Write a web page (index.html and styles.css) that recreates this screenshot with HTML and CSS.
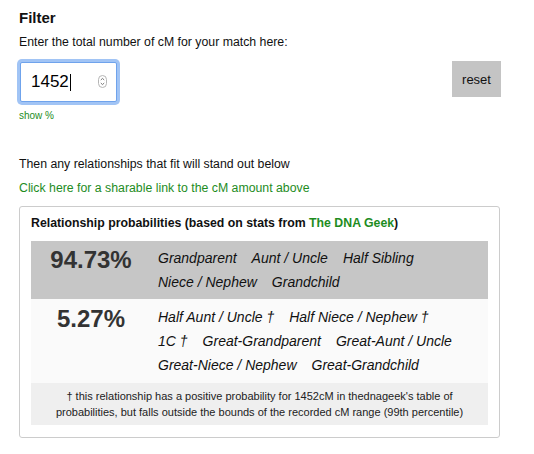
FILE: index.html
```html
<!DOCTYPE html>
<html lang="en">
<head>
    <meta charset="UTF-8">
    <meta name="viewport" content="width=device-width, initial-scale=1.0">
    <title>cM Relationship Filter</title>
    <link rel="stylesheet" href="styles.css">
</head>
<body>
    <div class="page">
        <h3 class="title">Filter</h3>
        <p class="lead">Enter the total number of cM for your match here:</p>

        <!-- cM input + reset -->
        <div class="input-row">
            <div class="number-field">
                <span class="value">1452</span>
                <span class="caret"></span>
                <svg class="spinner" width="9" height="13" viewBox="0 0 9 13">
                    <rect x="0.5" y="0.5" width="8" height="12" rx="4" fill="#fff" stroke="#b5b5b5"/>
                    <path d="M2.8 5 L4.5 3.4 L6.2 5" fill="none" stroke="#666" stroke-width="0.9"/>
                    <path d="M2.8 8 L4.5 9.6 L6.2 8" fill="none" stroke="#666" stroke-width="0.9"/>
                </svg>
            </div>
            <button class="reset" type="button">reset</button>
        </div>
        <a class="show-pct" href="#">show %</a>

        <p class="lead then">Then any relationships that fit will stand out below</p>
        <a class="share" href="#">Click here for a sharable link to the cM amount above</a>

        <!-- Results -->
        <div class="results">
            <h4 class="results-title">Relationship probabilities (based on stats from <a href="#">The DNA Geek</a>)</h4>

            <div class="prob-row top">
                <div class="pct">94.73%</div>
                <div class="names">
                    <span>Grandparent</span>
                    <span>Aunt / Uncle</span>
                    <span>Half Sibling</span>
                    <span>Niece / Nephew</span>
                    <span>Grandchild</span>
                </div>
            </div>

            <div class="prob-row">
                <div class="pct">5.27%</div>
                <div class="names">
                    <span>Half Aunt / Uncle &dagger;</span>
                    <span>Half Niece / Nephew &dagger;</span>
                    <span>1C &dagger;</span>
                    <span>Great-Grandparent</span>
                    <span>Great-Aunt / Uncle</span>
                    <span>Great-Niece / Nephew</span>
                    <span>Great-Grandchild</span>
                </div>
            </div>

            <div class="footnote">
                &dagger; this relationship has a positive probability for 1452cM in thednageek's table of
                probabilities, but falls outside the bounds of the recorded cM range (99th percentile)
            </div>
        </div>
    </div>
</body>
</html>
```

FILE: styles.css
```css
* {
    margin: 0;
    padding: 0;
    box-sizing: border-box;
    font-family: 'Liberation Sans', Arial, sans-serif;
}

body {
    background-color: #fff;
    color: #111;
}

.page {
    width: 482px;
    margin-left: 19px;
    padding-top: 9px;
}

.title {
    font-size: 15px;
    line-height: 18px;
    font-weight: bold;
}

.lead {
    font-size: 12.3px;
    line-height: 16px;
    margin-top: 7px;
}

.input-row {
    display: flex;
    justify-content: space-between;
    align-items: flex-start;
    margin-top: 11px;
}

.number-field {
    display: flex;
    align-items: center;
    width: 97px;
    height: 40px;
    margin: 1px 0 0 1px;
    padding-left: 10px;
    border: 1px solid #6fa3ec;
    border-radius: 2px;
    box-shadow: 0 0 0 3px rgba(110, 165, 240, 0.65);
    background-color: #fff;
}

.number-field .value {
    font-size: 17px;
    color: #000;
}

.number-field .caret {
    width: 1px;
    height: 17px;
    margin-left: 1px;
    background-color: #000;
}

.number-field .spinner {
    margin-left: 27px;
    margin-top: -2px;
}

.reset {
    width: 49px;
    height: 36px;
    border: none;
    background-color: #c4c4c4;
    font-size: 13px;
    color: #111;
    cursor: pointer;
}

.show-pct {
    display: block;
    margin-top: 8px;
    font-size: 10px;
    line-height: 12px;
    color: #1e8c1e;
    text-decoration: none;
}

.then {
    margin-top: 34px;
}

.share {
    display: block;
    margin-top: 8px;
    font-size: 12.3px;
    line-height: 16px;
    color: #1e8c1e;
    text-decoration: none;
}

.results {
    width: 481px;
    margin-top: 10px;
    padding: 8px 11px 12px;
    border: 1px solid #ccc;
    border-radius: 3px;
}

.results-title {
    font-size: 12.3px;
    line-height: 16px;
    font-weight: bold;
    color: #111;
    margin-bottom: 10px;
}

.results-title a {
    color: #1e8c1e;
    text-decoration: none;
}

.prob-row {
    display: grid;
    grid-template-columns: 120px 1fr;
    padding: 6px 27px 6px 0;
    background-color: #fafafa;
}

.prob-row.top {
    background-color: #c6c6c6;
    padding: 5px 27px 5px 0;
}

.pct {
    text-align: center;
    font-size: 24px;
    line-height: 28px;
    font-weight: bold;
    color: #333;
}

.names {
    display: flex;
    flex-wrap: wrap;
    column-gap: 15px;
    padding-left: 7px;
    font-size: 14px;
    line-height: 24px;
    font-style: italic;
    color: #111;
}

.footnote {
    padding: 5px 10px;
    background-color: #efefef;
    text-align: center;
    font-size: 11px;
    line-height: 16px;
    color: #222;
}
```
